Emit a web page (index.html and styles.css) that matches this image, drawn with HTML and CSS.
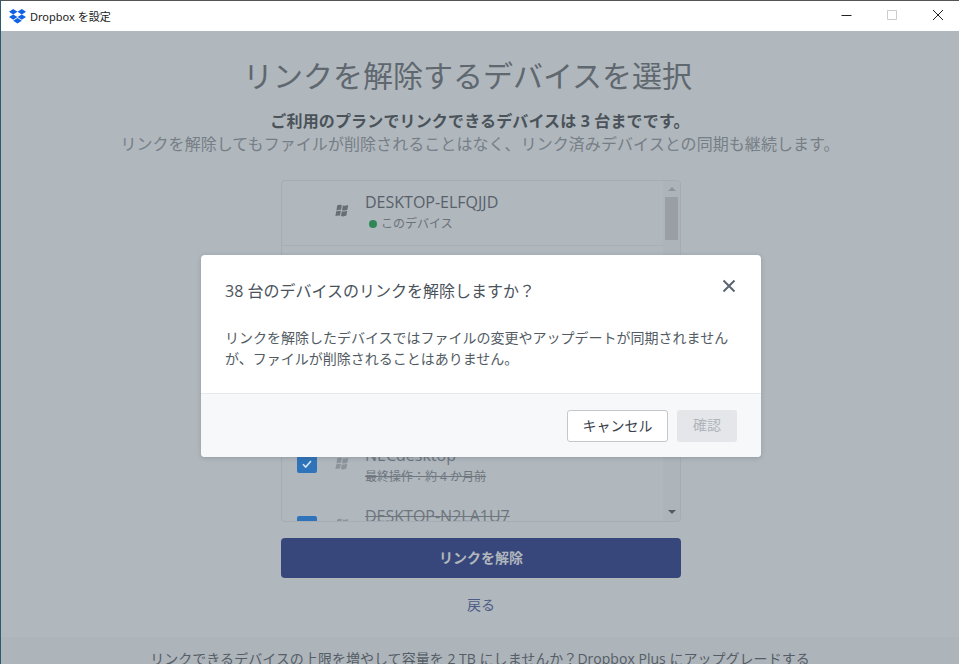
FILE: index.html
```html
<!DOCTYPE html>
<html lang="ja">
<head>
<meta charset="utf-8">
<title>Dropbox を設定</title>
<link rel="stylesheet" href="styles.css">
</head>
<body>
<div class="window">
  <header class="titlebar">
    <div class="title">
      <svg class="logo" width="17" height="15" viewBox="0 0 17 15"><path fill="#0f62e6" d="M4.200 0 0 2.700l4.200 2.700 4.300-2.700zM12.800 0 8.500 2.700l4.300 2.700L17 2.700zM0 8.100l4.200 2.700 4.300-2.700-4.300-2.700zM12.800 5.400 8.500 8.100l4.300 2.700L17 8.100zM4.200 11.700l4.300 2.800 4.300-2.800-4.300-2.700z"/></svg>
      <span>Dropbox を設定</span>
    </div>
    <div class="controls">
      <svg width="12" height="12" viewBox="0 0 12 12"><path d="M1.500 6.500h10" stroke="#222" fill="none"/></svg>
      <svg width="12" height="12" viewBox="0 0 12 12"><path d="M1.500 1.500h9v9h-9z" stroke="#ccc" fill="none"/></svg>
      <svg width="12" height="12" viewBox="0 0 12 12"><path d="M1 1l10 10M11 1 1 11" stroke="#222" fill="none"/></svg>
    </div>
  </header>
  <main class="content">
    <h1 class="heading">リンクを解除するデバイスを選択</h1>
    <p class="plan">ご利用のプランでリンクできるデバイスは 3 台までです。</p>
    <p class="note">リンクを解除してもファイルが削除されることはなく、リンク済みデバイスとの同期も継続します。</p>
    <div class="devices">
      <div class="list">
        <div class="device first">
          <span class="check-slot"></span>
          <svg class="win" width="15" height="14" viewBox="0 0 15 14"><path fill="#666e76" d="M2.200 1.600C3.500.8 5 .6 6.800 1.200L6 6C4.500 5.400 3 5.600 1.400 6.400zM7.800 1.400c1.700.6 3.300.5 5.400-.4L12.400 5.800c-1.900.9-3.500 1-5.400.4zM1.200 7.400C2.800 6.600 4.300 6.400 5.800 7L5 11.800c-1.500-.6-3.100-.4-4.600.4zM6.800 7.200c1.900.6 3.500.5 5.400-.4l-.8 4.800c-1.900.9-3.500 1-5.400.4z"/></svg>
          <div class="info">
            <div class="name">DESKTOP-ELFQJJD</div>
            <div class="sub"><i class="dot"></i>このデバイス</div>
          </div>
        </div>
        <div class="hidden-rows"></div>
        <div class="device">
          <span class="check-slot"><span class="check"><svg width="12" height="10" viewBox="0 0 12 10"><path d="M2 5.200 4.700 8 10 2" stroke="#d9e6f2" stroke-width="1.600" fill="none"/></svg></span></span>
          <svg class="win" width="15" height="14" viewBox="0 0 15 14"><path fill="#8c949b" d="M2.200 1.600C3.500.8 5 .6 6.800 1.200L6 6C4.500 5.400 3 5.600 1.400 6.400zM7.800 1.400c1.700.6 3.300.5 5.400-.4L12.400 5.800c-1.900.9-3.500 1-5.400.4zM1.200 7.400C2.800 6.600 4.300 6.400 5.800 7L5 11.800c-1.500-.6-3.100-.4-4.600.4zM6.800 7.200c1.900.6 3.500.5 5.400-.4l-.8 4.800c-1.900.9-3.500 1-5.400.4z"/></svg>
          <div class="info">
            <div class="name struck">NECdesktop</div>
            <div class="sub struck">最終操作：約 4 か月前</div>
          </div>
        </div>
        <div class="device">
          <span class="check-slot"><span class="check"></span></span>
          <svg class="win" width="15" height="14" viewBox="0 0 15 14"><path fill="#8c949b" d="M2.200 1.600C3.500.8 5 .6 6.800 1.200L6 6C4.500 5.400 3 5.600 1.400 6.400zM7.800 1.400c1.700.6 3.300.5 5.400-.4L12.400 5.800c-1.900.9-3.500 1-5.400.4zM1.200 7.400C2.800 6.600 4.300 6.400 5.800 7L5 11.800c-1.500-.6-3.100-.4-4.600.4zM6.800 7.200c1.900.6 3.500.5 5.400-.4l-.8 4.800c-1.900.9-3.500 1-5.400.4z"/></svg>
          <div class="info">
            <div class="name struck">DESKTOP-N2LA1U7</div>
          </div>
        </div>
      </div>
      <div class="scrollbar">
        <span class="arrow up"></span>
        <span class="thumb"></span>
        <span class="arrow down"></span>
      </div>
    </div>
    <div class="primary">リンクを解除</div>
    <div class="back">戻る</div>
    <footer class="upsell">リンクできるデバイスの上限を増やして容量を 2 TB にしませんか？Dropbox Plus にアップグレードする</footer>
  </main>
  <section class="modal">
    <div class="modal-body">
      <div class="modal-head">
        <h2 class="modal-title">38 台のデバイスのリンクを解除しますか？</h2>
        <svg class="close" width="14" height="14" viewBox="0 0 14 14"><path d="M1.500 1.500l11 11M12.500 1.500l-11 11" stroke="#5b6670" stroke-width="2" fill="none"/></svg>
      </div>
      <p class="modal-text">リンクを解除したデバイスではファイルの変更やアップデートが同期されませんが、ファイルが削除されることはありません。</p>
    </div>
    <div class="modal-foot">
      <div class="btn cancel">キャンセル</div>
      <div class="btn confirm">確認</div>
    </div>
  </section>
</div>
</body>
</html>
```
FILE: styles.css
```css
* { box-sizing: border-box; }
html, body { margin: 0; height: 100%; overflow: hidden; }
body { font-family: "Open Sans", "Noto Sans CJK JP", sans-serif; background: #fff; }

.window {
  position: relative;
  width: 959px;
  height: 664px;
  display: flex;
  flex-direction: column;
  overflow: hidden;
  border-top: 1px solid #555;
  border-left: 1px solid #2c5a70;
}

.titlebar {
  flex: 0 0 30px;
  display: flex;
  align-items: center;
  justify-content: space-between;
  background: #fff;
}
.title {
  display: flex;
  align-items: center;
  gap: 4px;
  padding-left: 8px;
  font: 11px "Noto Sans", "Noto Sans CJK JP", sans-serif;
  color: #222;
}
.controls {
  display: flex;
  gap: 34px;
  padding-right: 15px;
  margin-bottom: 2px;
}

.content {
  flex: 1;
  display: flex;
  flex-direction: column;
  align-items: center;
  padding-left: 2px;
  background: #b0b7bd;
  min-height: 0;
}
.heading {
  margin: 25px 27px 0 0;
  height: 40px;
  font-size: 30px;
  line-height: 40px;
  font-weight: 400;
  color: #5f676f;
}
.plan {
  margin: 14px 2px 0 0;
  font-size: 16px;
  letter-spacing: .15px;
  line-height: 22px;
  font-weight: 700;
  color: #4a525a;
}
.note {
  margin: 1px 2px 0 0;
  font-size: 16px;
  letter-spacing: .06px;
  line-height: 22px;
  color: #767e86;
}

.devices {
  width: 400px;
  height: 342px;
  margin-top: 25px;
  display: flex;
  border: 1px solid #a5acb3;
  border-radius: 4px;
  overflow: hidden;
  flex: none;
}
.list { flex: 1; overflow: hidden; }
.device {
  display: flex;
  height: 61px;
  align-items: flex-start;
}
.device.first { height: 65px; border-bottom: 1px solid #a8afb6; padding-top: 9px; }
.hidden-rows { height: 197px; }
.check-slot { flex: 0 0 53px; padding: 12px 0 0 15px; }
.check {
  display: flex;
  align-items: center;
  justify-content: center;
  width: 20px;
  height: 18px;
  border-radius: 2px;
  background: #2f74ba;
}
.win { margin-top: 14px; flex: none; }
.info { margin-left: 15px; }
.name {
  font-size: 16px;
  line-height: 24px;
  color: #58606a;
  white-space: nowrap;
}
.sub {
  margin-top: 0;
  display: flex;
  align-items: center;
  font-size: 12px;
  line-height: 20px;
  color: #6a727a;
  white-space: nowrap;
}
.struck { color: #6e767e; text-decoration: line-through; display: block; }
.dot {
  width: 8px;
  height: 8px;
  margin: 0 4px 0 4px;
  border-radius: 50%;
  background: #2f8656;
}

.scrollbar {
  flex: 0 0 17px;
  display: flex;
  flex-direction: column;
  align-items: center;
  background: #adb4ba;
}
.thumb { width: 13px; height: 43px; margin-top: 6px; background: #999fa5; }
.arrow { width: 0; height: 0; border-left: 4px solid transparent; border-right: 4px solid transparent; }
.arrow.up { margin-top: 6px; border-bottom: 4px solid #8f959b; }
.arrow.down { margin-top: auto; margin-bottom: 7px; border-top: 4px solid #555c63; }

.primary {
  flex: none;
  width: 400px;
  height: 40px;
  margin-top: 16px;
  border-radius: 4px;
  background: #38477b;
  color: #b0b7bd;
  font-size: 14px;
  font-weight: 700;
  line-height: 40px;
  text-align: center;
}
.back {
  margin-top: 17px;
  font-size: 14px;
  line-height: 20px;
  color: #4d5c86;
}
.upsell {
  align-self: stretch;
  margin: 22px 0 0 -2px;
  flex: 1;
  padding-top: 12px;
  background: #adb4ba;
  text-align: center;
  font-size: 14px;
  letter-spacing: .03px;
  line-height: 20px;
  color: #555d66;
  white-space: nowrap;
}

.modal {
  position: absolute;
  left: 200px;
  top: 254px;
  width: 560px;
  height: 202px;
  border-radius: 4px;
  background: #fff;
  overflow: hidden;
  display: flex;
  flex-direction: column;
  box-shadow: 0 1px 4px rgba(60, 70, 80, .25);
}
.modal-body { flex: 1; padding: 24px 24px 0; }
.modal-head { display: flex; justify-content: space-between; align-items: flex-start; }
.modal-title {
  margin: 0;
  font-size: 16px;
  line-height: 24px;
  font-weight: 400;
  color: #4a535b;
}
.close { margin-right: 1px; }
.modal-text {
  margin: 24px 0 0;
  font-size: 14px;
  line-height: 21px;
  color: #525b63;
}
.modal-foot {
  flex: 0 0 64px;
  display: flex;
  justify-content: flex-end;
  align-items: center;
  gap: 9px;
  padding: 0 24px;
  background: #f7f8fa;
  border-top: 1px solid #e6e8eb;
}
.btn {
  height: 32px;
  line-height: 30px;
  border-radius: 3px;
  font-size: 14px;
  text-align: center;
}
.cancel { width: 101px; background: #fff; border: 1px solid #c4c8cc; color: #39424a; }
.confirm { width: 60px; background: #e4e6e9; color: #b0b5ba; }
```
